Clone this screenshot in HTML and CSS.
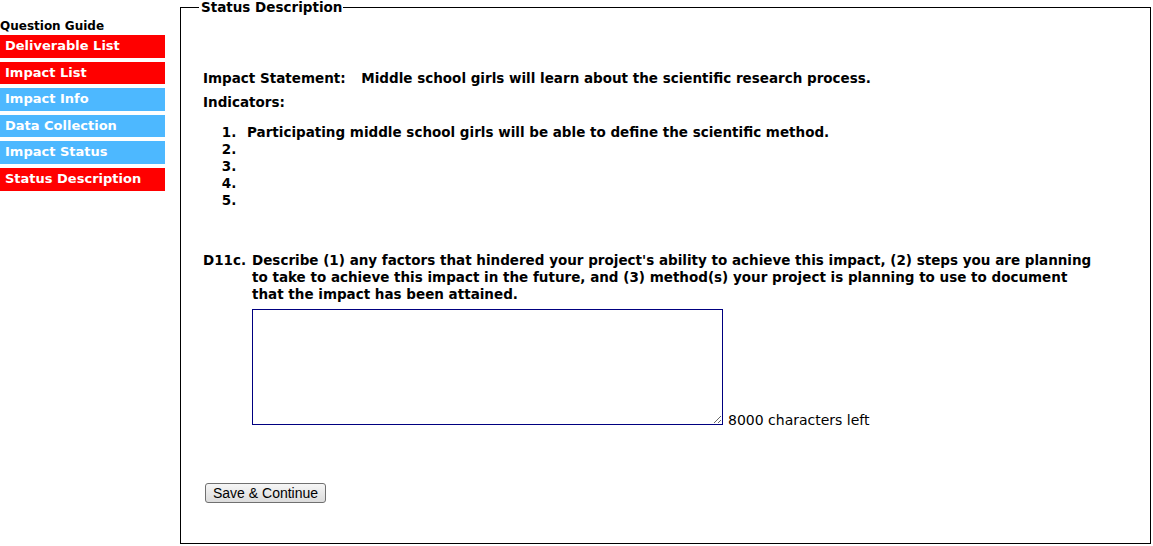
FILE: index.html
```html
<!DOCTYPE html>
<html lang="en">
<head>
  <meta charset="UTF-8" />
  <title>Status Description</title>
  <link rel="stylesheet" href="styles.css">
</head>
<body>

<div class="page">
  <div class="guide">
    <div class="guide-title">Question Guide</div>
    <a class="step done" href="#">Deliverable List</a>
    <a class="step done" href="#">Impact List</a>
    <a class="step todo" href="#">Impact Info</a>
    <a class="step todo" href="#">Data Collection</a>
    <a class="step todo" href="#">Impact Status</a>
    <a class="step done" href="#">Status Description</a>
  </div>

  <fieldset class="main">
    <legend>Status Description</legend>

    <div class="statement">
      <span class="label">Impact Statement:</span>
      <span>Middle school girls will learn about the scientific research process.</span>
    </div>
    <div class="indicators-title">Indicators:</div>

    <ol class="indicators">
      <li>Participating middle school girls will be able to define the scientific method.</li>
      <li></li>
      <li></li>
      <li></li>
      <li></li>
    </ol>

    <div class="question">
      <div class="qnum">D11c.</div>
      <div class="qbody">
        <div class="qtext">Describe (1) any factors that hindered your project's ability to achieve this impact, (2) steps you are planning to take to achieve this impact in the future, and (3) method(s) your project is planning to use to document that the impact has been attained.</div>
        <div class="answer">
          <textarea class="answer-box"></textarea>
          <span class="counter">8000 characters left</span>
        </div>
      </div>
    </div>

    <button class="save">Save &amp; Continue</button>
  </fieldset>
</div>

</body>
</html>
```

FILE: styles.css
```css
body {
  margin: 0;
  font-family: "DejaVu Sans", Verdana, sans-serif;
  color: #000;
  background: #fff;
}

.page {
  display: flex;
  align-items: flex-start;
}

/* left question guide */
.guide {
  width: 165px;
  flex-shrink: 0;
  padding-top: 19px;
}

.guide-title {
  font-size: 12px;
  font-weight: bold;
  line-height: 15px;
  margin-bottom: 1px;
}

.step {
  display: block;
  height: 22.6px;
  line-height: 22px;
  padding-left: 5px;
  margin-bottom: 4px;
  color: #fff;
  font-size: 13px;
  font-weight: bold;
  text-decoration: none;
}

.step.done {
  background-color: #ff0000;
}

.step.todo {
  background-color: #4db8ff;
}

/* main panel */
.main {
  flex: 1;
  margin: 0 2px 0 15px;
  padding: 0 20px 39px 22px;
  border: 1px solid #000;
  height: 503px;
  box-sizing: content-box;
  font-size: 13.5px;
  font-weight: bold;
}

.main legend {
  margin-left: -4px;
  padding: 0 1px 0 2px;
  font-size: 13.5px;
  font-weight: bold;
  line-height: 14px;
}

.statement {
  margin-top: 56px;
  line-height: 17px;
}

.statement .label {
  margin-right: 11px;
}

.indicators-title {
  margin-top: 7px;
  line-height: 17px;
}

.indicators {
  margin: 13px 0 0;
  padding-left: 38px;
  line-height: 17px;
}

.indicators li {
  height: 17px;
  padding-left: 6px;
}

.question {
  display: flex;
  margin-top: 43px;
  line-height: 17px;
}

.qnum {
  width: 49px;
  flex-shrink: 0;
}

.qtext {
  width: 845px;
}

.answer {
  display: flex;
  align-items: flex-end;
  margin-top: 6px;
}

.answer-box {
  width: 467px;
  height: 112px;
  margin: 0;
  padding: 1px;
  border: 1px solid #000080;
  resize: both;
  font-family: "Liberation Mono", monospace;
}

.counter {
  margin: 0 0 -2px 5px;
  font-weight: normal;
  font-size: 14px;
  line-height: 14px;
}

.save {
  display: block;
  margin: 58px 0 0 2px;
  padding: 1px 7px;
  height: 20px;
  font-family: "Liberation Sans", Arial, sans-serif;
  font-size: 14px;
  font-weight: normal;
  color: #000;
  background: linear-gradient(#f6f6f6, #dcdcdc);
  border: 1px solid #707070;
  border-radius: 3px;
}
```
